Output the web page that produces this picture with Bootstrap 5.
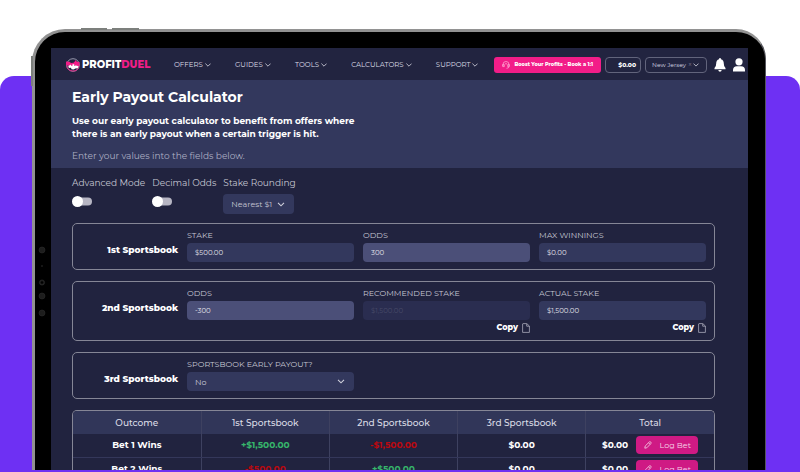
<!DOCTYPE html>
<html lang="en">
<head>
<meta charset="utf-8">
<meta name="viewport" content="width=device-width, initial-scale=1">
<title>Early Payout Calculator - ProfitDuel</title>
<link href="https://cdn.jsdelivr.net/npm/bootstrap@5.3.0/dist/css/bootstrap.min.css" rel="stylesheet">
<style>
:root{--ink:#21233f;--panel:#33385d;--panel-hi:#4b4f78;--line:#858696;--soft:#c6c7d3;--pink:#f21d88;--violet:#6e30f3}
body{font-family:Montserrat,Inter,"Liberation Sans",sans-serif;background:#fff;color:#fff;font-size:9px;line-height:12px}
.stage{height:100vh;padding:29px 34px 2px 32px;overflow:hidden;isolation:isolate}
.stage::before{content:"";position:absolute;z-index:-1;inset:76px 0 0 0;background:var(--violet);border-radius:14px 14px 0 0}
.device{background:#000;border:solid #929292;border-width:3px 1px 0 3px;border-right-color:#55555c;border-radius:33px 30px 0 0;padding:16px 17px 0 16px}
.device-key{position:absolute;background:#7c7f7c}
.key-a{left:46px;top:-4px;width:26px;height:2px}
.key-b{left:77px;top:-4px;width:27px;height:2px}
.key-c{left:-4px;top:24px;width:2px;height:30px}
.sensors{position:absolute;left:3px;top:214px}
.screen{background:var(--ink);overflow:hidden}
.topbar{height:32px;padding:1px 3px 0 15px;background:#222440}
.brand{font-size:10px;font-weight:800;color:#fff;width:84px;gap:2px}
.brand b{color:var(--pink);font-weight:800}
.menu-link{font-size:7px;color:#dcdce6;padding:0}
.cta{background:var(--pink);color:#fff;font-size:5px;font-weight:800;line-height:15px;border-radius:3px;padding:0 8px;height:16px}
.cta:hover{background:#d01884;color:#fff}
.pill{height:16px;border:1px solid #62647c;border-radius:4px;background-color:transparent;color:#fff;font-size:6px}
.balance{width:36px;padding:0 4px;font-weight:800;line-height:14px}
.state-pick{width:62px;color:#d5d6e0;appearance:none;padding:0 18px 0 6px;background:url("data:image/svg+xml,%3Csvg xmlns='http://www.w3.org/2000/svg' viewBox='0 0 6 4'%3E%3Cpath d='M.5.6 3 3.1 5.5.6' fill='none' stroke='%23d5d6e0' stroke-width='.8'/%3E%3C/svg%3E") no-repeat right 7px center/6px 4px}
.state-clear{position:absolute;right:15px;top:3px;color:#82839a;font-size:7px;line-height:9px}
.account-links{gap:7px;margin-left:7px}
.hero{background:var(--panel);padding:8px 21px 6px}
.hero h1{font-size:14px;line-height:18px;font-weight:700;margin:0 0 8px}
.hero .intro{font-size:9px;line-height:13px;font-weight:700;max-width:300px;margin:0 0 9px}
.hero .hint{font-size:9px;line-height:13px;color:#adafc4;margin:0}
.calc{padding:8px 33px 0 21px}
.options{gap:7px;margin-bottom:9px}
.opt-label{font-size:9px;line-height:14px;color:var(--soft);margin:0 0 4px;display:block}
.toggle{appearance:none;display:block;margin:6px 0 0;width:20px;height:11px;background:url("data:image/svg+xml,%3Csvg xmlns='http://www.w3.org/2000/svg' viewBox='0 0 20 11'%3E%3Crect x='4' y='1.5' width='16' height='8' rx='4' fill='%23b6b5c3'/%3E%3Ccircle cx='5.5' cy='5.5' r='5.5' fill='%23fff'/%3E%3C/svg%3E") no-repeat}
.toggle:checked{transform:scaleX(-1)}
.pick{background:var(--panel) url("data:image/svg+xml,%3Csvg xmlns='http://www.w3.org/2000/svg' viewBox='0 0 8 5'%3E%3Cpath d='M1 .8 4 3.8 7 .8' fill='none' stroke='%23d0d1dc' stroke-width='1.1'/%3E%3C/svg%3E") no-repeat right 9px center/8px 5px;border:0;border-radius:4px;color:var(--soft);font-size:8px;line-height:12px;height:19px;padding:0 20px 0 8px;min-height:0}
.pick-round{width:71px;height:20px}
.book{display:grid;grid-template-columns:105px repeat(3,1fr);column-gap:9px;border:1px solid var(--line);border-radius:5px;padding:5px 8px 7px 0;margin-bottom:11px}
.book h2{font-size:9px;line-height:12px;font-weight:800;text-align:right;margin:15px 0 0}
.field-label{display:block;font-size:8px;line-height:12px;color:var(--soft);margin:0 0 2px}
.entry{background:var(--panel);border:0;border-radius:4px;color:#e2e2ea;font-size:7px;line-height:12px;height:19px;min-height:0;padding:0 8px}
.entry:focus{background:var(--panel-hi);color:#fff}
.entry-hi{background:var(--panel-hi)}
.entry:disabled{background:#2a2d50;color:#484b68}
.copy{font-size:8px;line-height:11px;height:11px;font-weight:800;margin-top:2px}
.results{border:1px solid var(--line);border-radius:5px 5px 0 0;border-bottom:0}
.results table{table-layout:fixed;font-size:9px;line-height:12px;color:#fff}
.results th,.results td{padding:0;height:23px;text-align:center;vertical-align:middle;font-weight:700;border-bottom:1px solid #34375a}
.results th+th,.results td+td,.results th+td{border-left:1px solid #3e4160}
.results thead th{background:#313659;font-weight:500;color:#dcdce6;border-bottom:0}
.gain{color:#36b56b}.loss{color:#b9080f}
.log{background:#cf1a84;color:#f6d5e8;border-radius:4px;font-size:8px;line-height:12px;width:62px;height:18px;padding:0}
.log:hover{background:#a91269;color:#fff}
</style>
<script src="https://cdn.jsdelivr.net/npm/bootstrap@5.3.0/dist/js/bootstrap.bundle.min.js"></script>
</head>
<body>
<svg class="d-none" aria-hidden="true">
  <symbol id="chev" viewBox="0 0 6 4"><path d="M.4.6 3 3.2 5.6.6" fill="none" stroke="currentColor" stroke-width=".8"/></symbol>
  <symbol id="page" viewBox="0 0 8 10"><path d="M1 .6h3.800L7.400 3v6.400H.600V.900zM4.700.800v2.400h2.600" fill="none" stroke="#a9aaba" stroke-width=".8"/></symbol>
  <symbol id="pen" viewBox="0 0 8 8"><path d="M.8 7.200 1.200 5 5.400.9q.8-.5 1.400.2.6.7.1 1.400L2.800 6.800zM4.600 1.800l1.500 1.500" fill="none" stroke="currentColor" stroke-width=".8"/></symbol>
</svg>
<div class="stage position-relative d-flex">
  <div class="device position-relative d-flex flex-fill">
    <span class="device-key key-a"></span><span class="device-key key-b"></span><span class="device-key key-c"></span>
    <svg class="sensors" width="8" height="72" viewBox="0 0 8 72" aria-hidden="true"><g fill="#1d1d1d" stroke="#2b2b2b" stroke-width=".6"><circle cx="4" cy="4" r="3"/><circle cx="4" cy="20" r=".6"/><circle cx="4" cy="36.500" r="2.600"/><circle cx="4" cy="50" r="3"/><circle cx="4" cy="67" r="3"/></g><circle cx="4" cy="36.500" r="1.300" fill="#000"/></svg>
    <div class="screen flex-fill">
      <header class="topbar d-flex align-items-center">
        <a href="#" class="brand d-flex align-items-center text-decoration-none">
          <svg class="flex-shrink-0" width="14" height="14" viewBox="0 0 14 14" aria-hidden="true"><circle cx="7" cy="7" r="6.300" fill="#222440" stroke="#c9cad8" stroke-width=".7"/><path d="M.7 7.500a6.300 6.300 0 0 0 12.300 1" fill="none" stroke="#f21d88" stroke-width=".9"/><path d="M0 3.500 3.500 3.800 5 5l2.500-.2L9 3.300V2l2 1.700 2.500 .3v4L10 8.500 8 7.200 5 8.500 0 7z" fill="#f21d88"/><path d="M2.300 8 5 6.600v1.100h1.500V6.300h1.700v1.400L10 7.500l2.700.8-.8 1.900-2.700.2-1.500 1.200-2.200-.3-.5-1.500-2.200.3z" fill="#fff"/></svg>
          <span>PROFIT<b>DUEL</b></span>
        </a>
        <nav class="d-flex flex-fill justify-content-between ms-4 me-3">
          <a class="menu-link nav-link" href="#">OFFERS <svg width="6" height="4"><use href="#chev"/></svg></a>
          <a class="menu-link nav-link" href="#">GUIDES <svg width="6" height="4"><use href="#chev"/></svg></a>
          <a class="menu-link nav-link" href="#">TOOLS <svg width="6" height="4"><use href="#chev"/></svg></a>
          <a class="menu-link nav-link" href="#">CALCULATORS <svg width="6" height="4"><use href="#chev"/></svg></a>
          <a class="menu-link nav-link" href="#">SUPPORT <svg width="6" height="4"><use href="#chev"/></svg></a>
        </nav>
        <div class="d-flex align-items-center gap-1">
          <button type="button" class="cta btn border-0 d-flex align-items-center gap-1"><svg width="8" height="8" viewBox="0 0 8 8" fill="none" stroke="#ffb5da" stroke-width=".7" aria-hidden="true"><path d="M1 5V3.500a3 3 0 0 1 6 0V5M2.300 3.600v2H.7v-2zM7.300 3.600v2H5.700v-2zM3 3.200a1.200 1.200 0 0 1 2 0M7 5.600q0 1.600-2.500 1.700"/></svg>Boost Your Profits - Book a 1:1</button>
          <div class="pill balance text-end">$0.00</div>
          <div class="position-relative d-flex">
            <select class="pill state-pick" aria-label="State"><option>New Jersey</option></select>
            <button type="button" class="state-clear border-0 bg-transparent p-0" aria-label="Clear state">×</button>
          </div>
        </div>
        <div class="account-links d-flex">
          <a href="#" class="d-flex" aria-label="Notifications"><svg width="12" height="14" viewBox="0 0 12 14" fill="#fff"><path d="M6 0q1 0 1 1.200Q9.800 2 9.800 5.500 9.800 9 11.500 10v1.300H.500V10Q2.200 9 2.200 5.500 2.200 2 5 1.200 5 0 6 0zM4.300 12h3.400Q7.500 13.800 6 13.800T4.300 12z"/></svg></a>
          <a href="#" class="d-flex" aria-label="Account"><svg width="12" height="14" viewBox="0 0 12 14" fill="#fff"><circle cx="6" cy="3.800" r="3.600"/><path d="M0 13.500V12q0-3.500 4-3.800h4q4 .3 4 3.800v1.500z"/></svg></a>
        </div>
      </header>

      <section class="hero">
        <h1>Early Payout Calculator</h1>
        <p class="intro">Use our early payout calculator to benefit from offers where there is an early payout when a certain trigger is hit.</p>
        <p class="hint">Enter your values into the fields below.</p>
      </section>

      <main class="calc">
        <div class="options d-flex">
          <div><label class="opt-label" for="adv">Advanced Mode</label><input class="toggle" type="checkbox" role="switch" id="adv"></div>
          <div><label class="opt-label" for="dec">Decimal Odds</label><input class="toggle" type="checkbox" role="switch" id="dec"></div>
          <div><label class="opt-label" for="rnd">Stake Rounding</label><select class="form-select pick pick-round" id="rnd"><option>Nearest $1</option></select></div>
        </div>

        <section class="book">
          <h2>1st Sportsbook</h2>
          <div><label class="field-label" for="s1">STAKE</label><input class="form-control entry" id="s1" value="$500.00"></div>
          <div><label class="field-label" for="o1">ODDS</label><input class="form-control entry entry-hi" id="o1" value="300"></div>
          <div><label class="field-label" for="m1">MAX WINNINGS</label><input class="form-control entry" id="m1" value="$0.00"></div>
        </section>

        <section class="book">
          <h2>2nd Sportsbook</h2>
          <div><label class="field-label" for="o2">ODDS</label><input class="form-control entry entry-hi" id="o2" value="-300"></div>
          <div><label class="field-label" for="r2">RECOMMENDED STAKE</label><input class="form-control entry" id="r2" value="$1,500.00" disabled>
            <button type="button" class="copy btn border-0 p-0 text-white d-flex align-items-center gap-1 ms-auto">Copy <svg width="8" height="10"><use href="#page"/></svg></button></div>
          <div><label class="field-label" for="a2">ACTUAL STAKE</label><input class="form-control entry" id="a2" value="$1,500.00">
            <button type="button" class="copy btn border-0 p-0 text-white d-flex align-items-center gap-1 ms-auto">Copy <svg width="8" height="10"><use href="#page"/></svg></button></div>
        </section>

        <section class="book">
          <h2>3rd Sportsbook</h2>
          <div><label class="field-label" for="e3">SPORTSBOOK EARLY PAYOUT?</label><select class="form-select pick" id="e3"><option>No</option><option>Yes</option></select></div>
        </section>

        <div class="results overflow-hidden">
          <table class="w-100">
            <thead><tr><th scope="col">Outcome</th><th scope="col">1st Sportsbook</th><th scope="col">2nd Sportsbook</th><th scope="col">3rd Sportsbook</th><th scope="col">Total</th></tr></thead>
            <tbody>
              <tr><th scope="row">Bet 1 Wins</th><td class="gain">+$1,500.00</td><td class="loss">-$1,500.00</td><td>$0.00</td><td><div class="d-flex align-items-center justify-content-center gap-2">$0.00<button type="button" class="log btn border-0 d-flex align-items-center justify-content-center gap-2"><svg width="8" height="8"><use href="#pen"/></svg>Log Bet</button></div></td></tr>
              <tr><th scope="row">Bet 2 Wins</th><td class="loss">-$500.00</td><td class="gain">+$500.00</td><td>$0.00</td><td><div class="d-flex align-items-center justify-content-center gap-2">$0.00<button type="button" class="log btn border-0 d-flex align-items-center justify-content-center gap-2"><svg width="8" height="8"><use href="#pen"/></svg>Log Bet</button></div></td></tr>
            </tbody>
          </table>
        </div>
      </main>
    </div>
  </div>
</div>
</body>
</html>
